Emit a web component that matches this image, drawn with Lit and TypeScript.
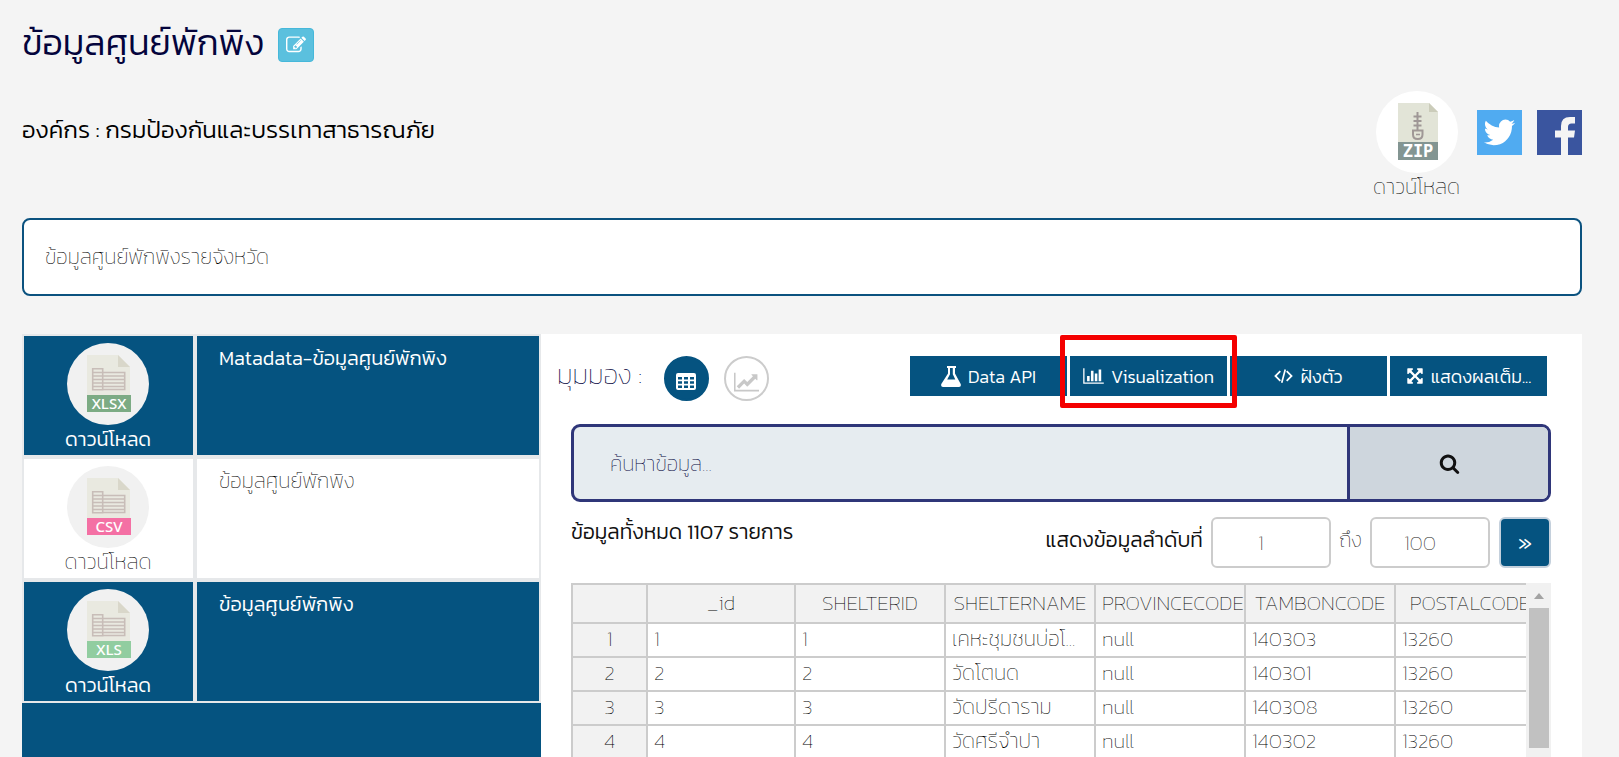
import { LitElement, html, css } from "lit";
import { customElement } from "lit/decorators.js";

const FONT = css`"Kanit", "Prompt", "Noto Sans Thai", "Noto Sans", "Open Sans", sans-serif`;

const ICONS: Record<string, { box: string; d: string }> = {
  search: { box: "0 0 1792 1792", d: "M1216 832q0-185-131.5-316.5t-316.5-131.5-316.5 131.5-131.5 316.5 131.5 316.5 316.5 131.5 316.5-131.5 131.5-316.5zm512 832q0 52-38 90t-90 38q-54 0-90-38l-343-342q-179 124-399 124-143 0-273.5-55.5t-225-150-150-225-55.5-273.5 55.5-273.5 150-225 225-150 273.5-55.5 273.5 55.5 225 150 150 225 55.5 273.5q0 220-124 399l343 343q37 37 37 90z" },
  edit: { box: "0 0 1792 1792", d: "M888 1184l116-116-152-152-116 116v56h96v96h56zm440-720q-16-16-33 1l-350 350q-17 17-1 33t33-1l350-350q17-17 1-33zm80 594v190q0 119-84.5 203.5t-203.5 84.5h-832q-119 0-203.5-84.5t-84.5-203.5v-832q0-119 84.5-203.5t203.5-84.5h832q63 0 117 25 15 7 18 23 3 17-9 29l-49 49q-14 14-32 8-23-6-45-6h-832q-66 0-113 47t-47 113v832q0 66 47 113t113 47h832q66 0 113-47t47-113v-126q0-13 9-22l64-64q15-15 35-7t20 29zm-96-738l288 288-672 672h-288v-288zm444 132l-92 92-288-288 92-92q28-28 68-28t68 28l152 152q28 28 28 68t-28 68z" },
  expand: { box: "0 0 1792 1792", d: "M1411 541l-355 355 355 355 144-144q29-31 70-14 39 17 39 59v448q0 26-19 45t-45 19h-448q-42 0-59-40-17-39 14-69l144-144-355-355-355 355 144 144q31 30 14 69-17 40-59 40h-448q-26 0-45-19t-19-45v-448q0-42 40-59 39-17 69 14l144 144 355-355-355-355-144 144q-19 19-45 19-12 0-24-5-40-17-40-59v-448q0-26 19-45t45-19h448q42 0 59 40 17 39-14 69l-144 144 355 355 355-355-144-144q-31-30-14-69 17-40 59-40h448q26 0 45 19t19 45v448q0 42-39 59-13 5-25 5-26 0-45-19z" },
  line: { box: "0 0 2048 1792", d: "M2048 1536v128h-2048v-1536h128v1408h1920zm-128-1248v435q0 21-19.5 29.5t-35.5-7.5l-121-121-633 633q-10 10-23 10t-23-10l-233-233-416 416-192-192 585-585q10-10 23-10t23 10l233 233 464-464-121-121q-16-16-7.5-35.5t29.5-19.5h435q14 0 23 9t9 23z" },
  bars: { box: "0 0 2048 1792", d: "M640 896v512h-256v-512h256zm384-512v1024h-256v-1024h256zm1024 1152v128h-2048v-1536h128v1408h1920zm-640-896v768h-256v-768h256zm384-384v1152h-256v-1152h256z" },
  table: { box: "0 0 20 18", d: "M2 0h16a2 2 0 0 1 2 2v13a2 2 0 0 1-2 2H2a2 2 0 0 1-2-2V2a2 2 0 0 1 2-2zM2 4v2.5h4V4zM8 4v2.5h4V4zM14 4v2.5h4V4zM2 8.2v2.5h4V8.2zM8 8.2v2.5h4V8.2zM14 8.2v2.5h4V8.2zM2 12.5V15h4v-2.5zM8 12.5V15h4v-2.5zM14 12.5V15h4v-2.5z" },
  flask: { box: "0 0 20 21", d: "M6 0h9v2h-1v5.500l5.700 10.500q.8 3-1.700 3H2q-2.500 0-1.700-3L7 7.500V2H6zM9 2v6.200L6.200 13.500h8.100L11.800 8.200V2z" },
  code: { box: "0 0 20 16", d: "M6 2.200L7.300 3.500 2.900 8l4.400 4.500L6 13.800.2 8zM14 2.200l5.800 5.800-5.800 5.800-1.300-1.300L17.100 8l-4.400-4.500zM11 .8l1.700.5-3.700 14-1.700-.5z" },
};

const icon = (name: string, w: number, h: number) => html`
  <svg width=${w} height=${h} viewBox=${ICONS[name].box} fill="currentColor" aria-hidden="true">
    <path fill-rule="evenodd" d=${ICONS[name].d}></path>
  </svg>`;

const sheetIcon = (label: string, colour: string) => html`
  <svg width="82" height="82" viewBox="0 0 82 82" role="img" aria-label=${label}>
    <circle cx="41" cy="41" r="41" fill="#f1f1f1"></circle>
    <path d="M20 12h31l12 12v30H20z" fill="#e9e9e0"></path>
    <path d="M51 12v12h12z" fill="#d9d7ca"></path>
    <g fill="none" stroke="#c8bdb8" stroke-width="1.600">
      <path d="M25.700 25.700h10v21h-10zM35.700 29.500h22v17h-22zM25.700 29.500h10M25.700 33h32M25.700 36.500h32M25.700 40h32M25.700 43.500h32"></path>
    </g>
    <rect x="20" y="52" width="44" height="17" fill=${colour}></rect>
    <text x="42" y="66" fill="#fff" font-family="Noto Sans" font-size="15" font-weight="500" text-anchor="middle">${label}</text>
  </svg>`;

const FILES = [
  { label: "XLSX", colour: "#7cab84", title: "Matadata-ข้อมูลศูนย์พักพิง", active: true },
  { label: "CSV", colour: "#f470a4", title: "ข้อมูลศูนย์พักพิง", active: false },
  { label: "XLS", colour: "#91cda0", title: "ข้อมูลศูนย์พักพิง", active: true },
];

const COLUMNS = ["_id", "SHELTERID", "SHELTERNAME", "PROVINCECODE", "TAMBONCODE", "POSTALCODE"];
const ROWS = [
  ["1", "1", "เคหะชุมชนบ่อโ...", "null", "140303", "13260"],
  ["2", "2", "วัดโตนด", "null", "140301", "13260"],
  ["3", "3", "วัดปรีดาราม", "null", "140308", "13260"],
  ["4", "4", "วัดศรีจำปา", "null", "140302", "13260"],
];

@customElement("dataset-header")
class DatasetHeader extends LitElement {
  static styles = css`
    :host { display: block; font-family: ${FONT}; }
    svg { display: block; }
    .title-row { display: flex; align-items: center; gap: 14px; height: 64px; padding-top: 20px; box-sizing: border-box; }
    h1 { margin: 0; font-size: 36px; line-height: 52px; font-weight: 300; color: #04043c; white-space: nowrap; }
    .edit { display: grid; place-items: center; width: 36px; height: 34px; margin-top: 6px; padding: 0; color: #fff; background: #5bc0de; border: 1px solid #46b8da; border-radius: 4px; }
    .meta { display: flex; justify-content: space-between; align-items: flex-start; height: 154px; }
    .org { margin: 48px 0 0; font-size: 24px; line-height: 36px; font-weight: 300; color: #000; white-space: nowrap; }
    .links { display: flex; align-items: flex-start; gap: 15px; padding-top: 27px; }
    .zip { display: flex; flex-direction: column; align-items: center; width: 91px; color: #000; text-decoration: none; font-size: 21px; line-height: 28px; font-weight: 200; white-space: nowrap; }
    .social { margin-top: 19px; }
    .about { box-sizing: border-box; margin: 0; padding: 21px; border: 2px solid #0b527f; border-radius: 8px; background: #fff; font-size: 21px; line-height: 32px; font-weight: 200; color: #000; }
  `;

  render() {
    return html`
      <div class="title-row">
        <h1>ข้อมูลศูนย์พักพิง</h1>
        <button class="edit" aria-label="แก้ไข">${icon("edit", 20, 20)}</button>
      </div>
      <div class="meta">
        <p class="org">องค์กร : กรมป้องกันและบรรเทาสาธารณภัย</p>
        <div class="links">
          <a class="zip" href="#zip">
            <svg width="82" height="82" viewBox="0 0 82 82" role="img" aria-label="ZIP">
              <circle cx="41" cy="41" r="41" fill="#fff"></circle>
              <path d="M22 12h31l9 9v30H22z" fill="#e2e4d7"></path>
              <path d="M53 12v9h9z" fill="#cbccba"></path>
              <path d="M41.500 21v18M37.500 25.500h8M37.500 30h8M37.500 34.500h8" stroke="#9f9796" stroke-width="2" fill="none"></path>
              <path d="M37 39.500h9.500v4q0 4.500-4.750 4.500t-4.750-4.500z" stroke="#9f9796" stroke-width="2" fill="#e2e4d7"></path>
              <path d="M40 43.500h4" stroke="#9f9796" stroke-width="1.500"></path>
              <rect x="22" y="51" width="40" height="18" fill="#839592"></rect>
              <text x="42" y="66" fill="#fff" font-family="DejaVu Sans Mono" font-size="17" font-weight="700" text-anchor="middle">ZIP</text>
            </svg>
            ดาวน์โหลด
          </a>
          <a class="social" href="#twitter" aria-label="Twitter">
            <svg width="45" height="45" viewBox="0 0 45 45">
              <rect width="45" height="45" fill="#50abf1"></rect>
              <g transform="translate(4.500 4.500) scale(.0200)"><path fill="#fff" d="M1684 408q-67 98-162 167 1 14 1 42 0 130-38 259.500t-115.500 248.500-184.500 210.500-258 146-323 54.500q-271 0-496-145 35 4 78 4 225 0 401-138-105-2-188-64.500t-114-159.500q33 5 61 5 43 0 85-11-112-23-185.500-111.500t-73.500-205.500v-4q68 38 146 41-66-44-105-115t-39-154q0-88 44-163 121 149 294.500 238.500t371.500 99.500q-8-38-8-74 0-134 94.500-228.500t228.500-94.500q140 0 236 102 109-21 205-78-37 115-142 178 93-10 186-50z"></path></g>
            </svg>
          </a>
          <a class="social" href="#facebook" aria-label="Facebook">
            <svg width="45" height="45" viewBox="0 0 45 45">
              <rect width="45" height="45" fill="#3a559f"></rect>
              <path fill="#f4f4f4" d="M24 45V27.500h-6V20.500h6V16q0-9 9-9h5v6.500h-3.500q-3.500 0-3.500 3.500v3.500h7l-1 7h-6V45z"></path>
            </svg>
          </a>
        </div>
      </div>
      <p class="about">ข้อมูลศูนย์พักพิงรายจังหวัด</p>
    `;
  }
}

@customElement("file-list")
class FileList extends LitElement {
  static styles = css`
    :host { display: flex; flex-direction: column; font-family: ${FONT}; background: #055380; }
    svg { display: block; }
    .file { display: grid; grid-template-columns: 173px 1fr; background: #e6e8ea; font-size: 21px; font-weight: 200; }
    .download, .name { box-sizing: border-box; height: 119px; margin: 2px; background: #fff; color: #000; text-decoration: none; white-space: nowrap; }
    .download { display: flex; flex-direction: column; align-items: center; padding: 7px 1px 0 0; line-height: 28px; }
    .name { padding: 7px 22px; line-height: 30px; }
    .active .download, .active .name { background: #055380; color: #fff; font-size: 20px; font-weight: 300; }
  `;

  render() {
    return FILES.map(
      (f) => html`
        <div class="file ${f.active ? "active" : ""}">
          <a class="download" href="#${f.label}">${sheetIcon(f.label, f.colour)} ดาวน์โหลด</a>
          <a class="name" href="#open-${f.label}">${f.title}</a>
        </div>`
    );
  }
}

@customElement("data-grid")
class DataGrid extends LitElement {
  static styles = css`
    :host { display: flex; font-family: ${FONT}; overflow: hidden; }
    .view { flex: 1; min-width: 0; overflow: hidden; }
    table { table-layout: fixed; width: 975px; border-collapse: collapse; font-size: 21px; font-weight: 200; color: #000; }
    .index { width: 75px; }
    .first { width: 148px; }
    .field { width: 150px; }
    th, td { box-sizing: border-box; height: 34px; padding: 0 6px 2px; border: 2px solid #ccc; overflow: hidden; white-space: nowrap; line-height: 30px; font-weight: 200; text-align: left; }
    thead th { height: 39px; background: #f2f2f2; text-align: center; }
    tbody th { background: #f2f2f2; text-align: center; }
    .scroll { box-sizing: border-box; flex: none; width: 25px; height: 174px; padding: 10px 2px 9px 3px; background: #f1f1f1; display: flex; flex-direction: column; align-items: center; gap: 9px; }
    .up { width: 0; height: 0; border: 5px solid transparent; border-top: 0; border-bottom: 6px solid #a3a3a3; }
    .thumb { flex: 1; width: 20px; background: #c1c1c1; }
  `;

  render() {
    return html`
      <div class="view">
        <table>
          <colgroup>
            <col class="index" /><col class="first" />
            ${COLUMNS.slice(1).map(() => html`<col class="field" />`)}
          </colgroup>
          <thead><tr><th></th>${COLUMNS.map((c) => html`<th scope="col">${c}</th>`)}</tr></thead>
          <tbody>
            ${ROWS.map((r, i) => html`<tr><th scope="row">${i + 1}</th>${r.map((v) => html`<td>${v}</td>`)}</tr>`)}
          </tbody>
        </table>
      </div>
      <div class="scroll"><span class="up"></span><span class="thumb"></span></div>
    `;
  }
}

@customElement("data-explorer")
class DataExplorer extends LitElement {
  static styles = css`
    :host { display: block; box-sizing: border-box; padding: 22px 31px 0 30px; background: #fff; font-family: ${FONT}; font-weight: 200; overflow: hidden; }
    svg { display: block; flex: none; }
    button, input { font-family: inherit; font-weight: 200; box-sizing: border-box; }
    .toolbar { display: flex; align-items: flex-start; justify-content: space-between; height: 68px; padding-right: 4px; margin-left: -14px; }
    .views { display: flex; gap: 15px; }
    .label { width: 92px; font-size: 27px; line-height: 38px; color: #04043c; white-space: nowrap; }
    .view { display: grid; place-items: center; width: 45px; height: 45px; padding: 6px 0 0; border: 2px solid #ccc; border-radius: 50%; background: #fff; color: #c8c8c8; }
    .view.on { background: #055380; border-color: #055380; color: #fff; }
    .actions { display: grid; grid-template-columns: repeat(4, 157px); gap: 3px; }
    .slot { position: relative; display: grid; }
    .action { display: flex; align-items: center; justify-content: center; gap: 7px; height: 40px; padding: 0; border: 0; background: #055380; color: #fff; font-size: 18px; font-weight: 300; white-space: nowrap; }
    .mark { position: absolute; inset: -21px -10px -12px; border: 5px solid #f40000; border-radius: 2px; z-index: 1; pointer-events: none; }
    .search { display: flex; height: 78px; border: 3px solid #2f3679; border-radius: 9px; box-sizing: border-box; overflow: hidden; background: #e6ecf0; }
    .query { flex: 1; min-width: 0; padding: 0 36px; border: 0; background: transparent; font-size: 21px; color: #04043c; }
    .query::placeholder { color: #04043c; opacity: 1; }
    .go { display: grid; place-items: center; width: 201px; padding: 0; border: 0; border-left: 3px solid #2f3679; background: #ced6dd; color: #111; }
    .summary { display: flex; justify-content: space-between; align-items: flex-start; padding-top: 15px; height: 81px; box-sizing: border-box; color: #111; }
    .total { margin: 0; font-size: 21px; line-height: 30px; font-weight: 300; white-space: nowrap; }
    .range { display: flex; gap: 8px; font-size: 21px; line-height: 46px; white-space: nowrap; }
    .from { font-weight: 300; }
    .num { width: 120px; height: 51px; border: 2px solid #ccc; border-radius: 6px; padding: 0 20px 0 0; text-align: center; font-size: 21px; color: #222; }
    .next { width: 52px; height: 51px; margin-left: 1px; padding: 0; border: 2px solid #c4d0dc; border-radius: 6px; background: #055380; color: #fff; font-size: 24px; line-height: 30px; font-weight: 300; }
  `;

  render() {
    return html`
      <div class="toolbar">
        <div class="views">
          <span class="label">มุมมอง :</span>
          <button class="view on" aria-label="ตาราง">${icon("table", 20, 18)}</button>
          <button class="view" aria-label="กราฟ">${icon("line", 25, 22)}</button>
        </div>
        <div class="actions">
          <div class="slot"><button class="action">${icon("flask", 20, 21)} Data API</button></div>
          <div class="slot"><button class="action">${icon("bars", 21, 18)} Visualization</button><span class="mark"></span></div>
          <div class="slot"><button class="action">${icon("code", 19, 16)} ฝังตัว</button></div>
          <div class="slot"><button class="action">${icon("expand", 18, 18)} แสดงผลเต็ม...</button></div>
        </div>
      </div>
      <form class="search">
        <input class="query" type="text" aria-label="ค้นหาข้อมูล" placeholder="ค้นหาข้อมูล..." />
        <button class="go" type="button" aria-label="ค้นหา">${icon("search", 21, 21)}</button>
      </form>
      <div class="summary">
        <p class="total">ข้อมูลทั้งหมด 1107 รายการ</p>
        <div class="range">
          <label class="from" for="from">แสดงข้อมูลลำดับที่</label>
          <input class="num" id="from" type="text" value="1" />
          <label for="to">ถึง</label>
          <input class="num" id="to" type="text" value="100" />
          <button class="next">»</button>
        </div>
      </div>
      <data-grid></data-grid>
    `;
  }
}

@customElement("app-root")
class AppRoot extends LitElement {
  static styles = css`
    :host { display: flex; flex-direction: column; box-sizing: border-box; height: 100vh; overflow: hidden; padding: 0 37px 0 22px; background: #f4f4f4; }
    .workspace { flex: 1; min-height: 0; display: grid; grid-template-columns: minmax(0, 333fr) minmax(0, 668fr); margin-top: 38px; }
  `;

  render() {
    return html`
      <dataset-header></dataset-header>
      <main class="workspace">
        <file-list></file-list>
        <data-explorer></data-explorer>
      </main>
    `;
  }
}
